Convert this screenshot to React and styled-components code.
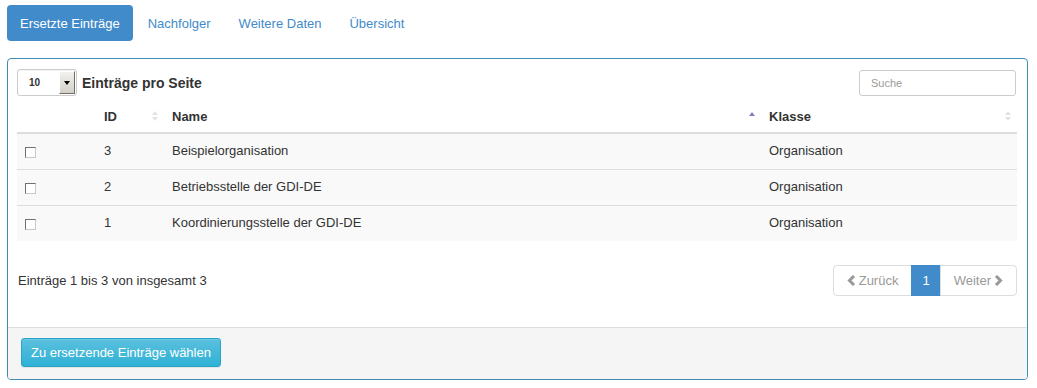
import React from 'react'
import styled, { createGlobalStyle } from 'styled-components'

const GlobalStyle = createGlobalStyle`
	body {
		margin: 0;
		background: #fff;
		font-family: "Liberation Sans", Arial, sans-serif;
		font-size: 13px;
		color: #333;
	}
`

const Page = styled.div`
	padding: 5px 9px 0 7px;
`

const Pills = styled.ul`
	display: flex;
	list-style: none;
	margin: 0 0 17px;
	padding: 0;
	gap: 2px;
`

const Pill = styled.li`
	height: 36px;
	padding: 0 13px;
	display: flex;
	align-items: center;
	border-radius: 4px;
	color: ${(p) => (p.active ? '#fff' : '#428bca')};
	background: ${(p) => (p.active ? '#428bca' : 'transparent')};
	cursor: pointer;
`

const Panel = styled.div`
	border: 1px solid #3f8db3;
	border-radius: 4px;
	overflow: hidden;
`

const Body = styled.div`
	padding: 10px 10px 31px 9px;
`

const Controls = styled.div`
	display: flex;
	justify-content: space-between;
	align-items: center;
	height: 27px;
`

const Length = styled.div`
	display: flex;
	align-items: center;
	gap: 5px;
	font-weight: bold;
	font-size: 14px;
`

const FakeSelect = styled.div`
	width: 58px;
	height: 25px;
	border: 1px solid #ccc;
	border-radius: 3px;
	display: flex;
	align-items: stretch;
	background: #fff;
	box-shadow: inset 0 1px 1px rgba(0, 0, 0, 0.05);
`

const SelectValue = styled.span`
	flex: 1;
	display: flex;
	align-items: center;
	padding-left: 11px;
	font-size: 10px;
	font-weight: bold;
`

const SelectArrow = styled.span`
	width: 14px;
	margin: 1px 1px 1px 0;
	background: linear-gradient(#f1f1ef, #d4d0c8);
	border: 1px solid;
	border-color: #fff #716f64 #716f64 #fff;
	display: flex;
	align-items: center;
	justify-content: center;
	&::after {
		content: '';
		border-left: 3px solid transparent;
		border-right: 3px solid transparent;
		border-top: 4px solid #000;
	}
`

const Search = styled.input`
	height: 24px;
	box-sizing: content-box;
	padding: 0 0 0 11px;
	margin-right: 1px;
	width: 144px;
	border: 1px solid #ccc;
	border-radius: 3px;
	font-family: inherit;
	font-size: 11px;
	&::placeholder {
		color: #999;
	}
`

const Table = styled.table`
	width: 100%;
	border-collapse: collapse;
	margin-top: 4px;
`

const Th = styled.th`
	position: relative;
	text-align: left;
	font-weight: bold;
	height: 32px;
	padding: 0 8px;
	border-bottom: 2px solid #ddd;
	width: ${(p) => p.w || 'auto'};
`

const SortIcon = styled.svg`
	position: absolute;
	right: 5px;
	top: 10px;
`

const Tr = styled.tr`
	background: #f9f9f9;
`

const Td = styled.td`
	height: 33px;
	padding: 0 8px 2px;
	border-top: 1px solid #ddd;
`

const Check = styled.span`
	display: inline-block;
	width: 9px;
	height: 9px;
	border: 1px solid;
	border-color: #707070 #c8c8c8 #c8c8c8 #707070;
	background: #fff;
	vertical-align: middle;
	margin-top: 1px;
`

const Bottom = styled.div`
	display: flex;
	justify-content: space-between;
	align-items: center;
	margin-top: 24px;
	padding-left: 1px;
`

const Pager = styled.ul`
	display: flex;
	list-style: none;
	margin: 0;
	padding: 0;
`

const PageItem = styled.li`
	height: 29px;
	padding: 0 ${(p) => p.pad}px;
	display: flex;
	align-items: center;
	gap: 3px;
	border: 1px solid ${(p) => (p.active ? '#428bca' : '#ddd')};
	margin-left: -1px;
	color: ${(p) => (p.active ? '#fff' : '#999')};
	background: ${(p) => (p.active ? '#428bca' : '#fff')};
	&:first-child {
		border-radius: 4px 0 0 4px;
	}
	&:last-child {
		border-radius: 0 4px 4px 0;
	}
`

const Footer = styled.div`
	background: #f5f5f5;
	border-top: 1px solid #ddd;
	padding: 10px 13px 12px;
`

const InfoButton = styled.button`
	height: 29px;
	padding: 0 9px;
	border: 1px solid #28a4c9;
	border-radius: 3px;
	background: linear-gradient(#5bc0de, #2fb1d6);
	color: #fff;
	font-family: inherit;
	font-size: 13px;
	box-shadow: inset 0 1px 0 rgba(255, 255, 255, 0.15), 0 1px 1px rgba(0, 0, 0, 0.075);
`

function Sort({ active }) {
	if (active) {
		return (
			<SortIcon width="8" height="12" viewBox="0 0 8 12">
				<path d="M1 6 L4 2 L7 6 Z" fill="#7b7fc9" />
			</SortIcon>
		)
	}
	return (
		<SortIcon width="8" height="12" viewBox="0 0 8 12">
			<path d="M1 5 L4 1 L7 5 Z" fill="#e3e3e3" />
			<path d="M1 7 L4 11 L7 7 Z" fill="#e3e3e3" />
		</SortIcon>
	)
}

function Chevron({ dir }) {
	return (
		<svg width="9" height="11" viewBox="0 0 9 11">
			<path
				d={dir === 'left' ? 'M7 1 L2.5 5.5 L7 10' : 'M2 1 L6.5 5.5 L2 10'}
				stroke="#999"
				strokeWidth="3"
				fill="none"
			/>
		</svg>
	)
}

const rows = [
	{ id: 3, name: 'Beispielorganisation', klasse: 'Organisation' },
	{ id: 2, name: 'Betriebsstelle der GDI-DE', klasse: 'Organisation' },
	{ id: 1, name: 'Koordinierungsstelle der GDI-DE', klasse: 'Organisation' },
]

export default function App() {
	return (
		<Page>
			<GlobalStyle />
			<Pills>
				<Pill active>Ersetzte Einträge</Pill>
				<Pill>Nachfolger</Pill>
				<Pill>Weitere Daten</Pill>
				<Pill>Übersicht</Pill>
			</Pills>
			<Panel>
				<Body>
					<Controls>
						<Length>
							<FakeSelect>
								<SelectValue>10</SelectValue>
								<SelectArrow />
							</FakeSelect>
							Einträge pro Seite
						</Length>
						<Search placeholder="Suche" />
					</Controls>
					<Table>
						<thead>
							<tr>
								<Th w="63px" />
								<Th w="52px">
									ID
									<Sort />
								</Th>
								<Th>
									Name
									<Sort active />
								</Th>
								<Th w="240px">
									Klasse
									<Sort />
								</Th>
							</tr>
						</thead>
						<tbody>
							{rows.map((r) => (
								<Tr key={r.id}>
									<Td>
										<Check />
									</Td>
									<Td>{r.id}</Td>
									<Td>{r.name}</Td>
									<Td>{r.klasse}</Td>
								</Tr>
							))}
						</tbody>
					</Table>
					<Bottom>
						<span>Einträge 1 bis 3 von insgesamt 3</span>
						<Pager>
							<PageItem pad={13}>
								<Chevron dir="left" />
								Zurück
							</PageItem>
							<PageItem active pad={10}>
								1
							</PageItem>
							<PageItem pad={13}>
								Weiter
								<Chevron dir="right" />
							</PageItem>
						</Pager>
					</Bottom>
				</Body>
				<Footer>
					<InfoButton>Zu ersetzende Einträge wählen</InfoButton>
				</Footer>
			</Panel>
		</Page>
	)
}
